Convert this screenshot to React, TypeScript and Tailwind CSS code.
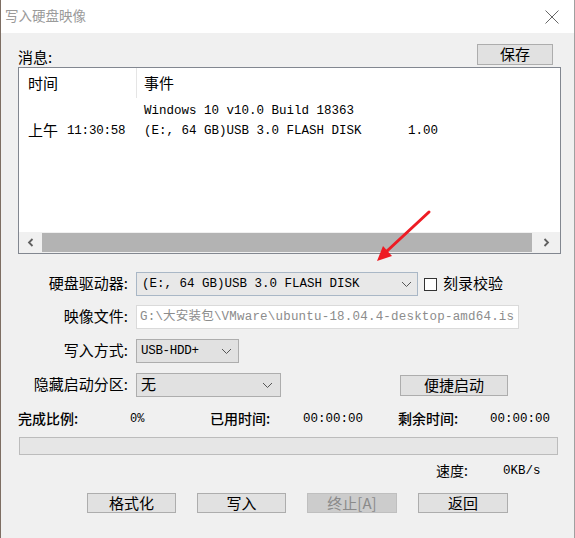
import React from 'react'

// shared font stacks
const CJK = "font-['Noto_Sans_CJK_SC',sans-serif]"
const MONO = "font-['Liberation_Mono','Noto_Sans_CJK_SC',monospace]"

function Chevron() {
  return (
    <svg width="11" height="7" viewBox="0 0 11 7" className="shrink-0">
      <path d="M1 1 L5.5 5.5 L10 1" fill="none" stroke="#555" strokeWidth="1" />
    </svg>
  )
}

function Btn({ label, disabled, className = '' }: { label: string; disabled?: boolean; className?: string }) {
  return (
    <div
      className={`flex items-center justify-center border pb-[2px] text-[15px] leading-none ${CJK} ${
        disabled ? 'border-[#bfbfbf] bg-[#cccccc] text-[#8a8a8a]' : 'border-[#adadad] bg-[#e1e1e1] text-black'
      } ${className}`}
    >
      {label}
    </div>
  )
}

export default function App() {
  return (
    <div className={`relative h-[538px] w-[575px] overflow-hidden border-l border-r border-l-[#7d6e63] border-r-[#a0a0a0] bg-[#f0f0f0] ${CJK}`}>
      {/* Title bar */}
      <div className="flex h-[33px] items-center justify-between bg-white pl-[4px] pr-[15px]">
        <span className="pb-[2px] text-[13.5px] leading-none text-[#9a9a9a]">写入硬盘映像</span>
        <svg width="14" height="14" viewBox="0 0 14 14">
          <path d="M0.5 0.5 L13.5 13.5 M13.5 0.5 L0.5 13.5" stroke="#666" strokeWidth="1" />
        </svg>
      </div>

      <div className="flex flex-col pl-[17px] pr-[13px]">
        {/* Messages header */}
        <div className="flex h-[34px] items-end justify-between">
          <span className="text-[15px] leading-[20px]">消息:</span>
          <Btn label="保存" className="mb-[2px] mr-[8px] h-[21px] w-[76px]" />
        </div>

        {/* Log list */}
        <div className="flex h-[187px] flex-col border border-[#828790] bg-white">
          <div className="flex h-[30px] items-center text-[15px] leading-none">
            <span className="w-[117px] pb-[2px] pl-[9px]">时间</span>
            <span className="h-full w-px bg-[#e5e5e5]" />
            <span className="pb-[2px] pl-[7px]">事件</span>
          </div>
          <div className={`mt-[3px] flex h-[20px] items-center text-[12.5px] ${MONO}`}>
            <span className="w-[125px]" />
            <span>Windows 10 v10.0 Build 18363</span>
          </div>
          <div className={`flex h-[20px] items-center text-[12.5px] ${MONO}`}>
            <span className="flex w-[125px] items-center pl-[9px]">
              <span className={`pb-[2px] text-[15px] ${CJK}`}>上午</span>
              <span className="ml-[9px] tracking-[-0.2px]">11:30:58</span>
            </span>
            <span className="w-[264px] whitespace-pre">(E:, 64 GB)USB 3.0 FLASH DISK</span>
            <span>1.00</span>
          </div>
          {/* horizontal scrollbar */}
          <div className="mt-auto flex h-[21px] bg-[#f0f0f0]">
            <div className="flex w-[23px] items-center justify-center">
              <svg width="7" height="9" viewBox="0 0 7 9">
                <path d="M5.5 1 L2 4.5 L5.5 8" fill="none" stroke="#606060" strokeWidth="1.8" />
              </svg>
            </div>
            <div className="my-px flex-1 bg-[#b3b3b3]" />
            <div className="flex w-[28px] items-center justify-center">
              <svg width="7" height="9" viewBox="0 0 7 9">
                <path d="M1.5 1 L5 4.5 L1.5 8" fill="none" stroke="#606060" strokeWidth="1.8" />
              </svg>
            </div>
          </div>
        </div>

        {/* Drive row */}
        <div className="mt-[18px] flex h-[24px] items-center">
          <span className="w-[110px] pb-[4px] text-right text-[15px] leading-none">硬盘驱动器:</span>
          <div className={`ml-[8px] flex h-full w-[282px] items-center justify-between border border-[#a9b7c6] bg-[#e8e8e8] pl-[5px] pr-[5px] text-[12.5px] ${MONO}`}>
            <span className="whitespace-pre">(E:, 64 GB)USB 3.0 FLASH DISK</span>
            <Chevron />
          </div>
          <span className="ml-[6px] h-[13px] w-[13px] border border-[#333] bg-white" />
          <span className="ml-[6px] pb-[4px] text-[15px] leading-none">刻录校验</span>
        </div>

        {/* Image file row */}
        <div className="mt-[9px] flex h-[24px] items-center">
          <span className="w-[110px] pb-[4px] text-right text-[15px] leading-none">映像文件:</span>
          <div className={`ml-[8px] flex h-full w-[383px] items-center overflow-hidden whitespace-nowrap border border-[#dadada] bg-white pl-[3px] text-[12.5px] tracking-[0.2px] text-[#8c8c8c] ${MONO}`}>
            G:\大安装包\VMware\ubuntu-18.04.4-desktop-amd64.is
          </div>
        </div>

        {/* Write mode row */}
        <div className="mt-[10px] flex h-[24px] items-center">
          <span className="w-[110px] pb-[4px] text-right text-[15px] leading-none">写入方式:</span>
          <div className={`ml-[8px] flex h-full w-[103px] items-center justify-between border border-[#adadad] bg-[#e1e1e1] pl-[4px] pr-[6px] text-[12.5px] ${MONO}`}>
            <span className="tracking-[-0.3px]">USB-HDD+</span>
            <Chevron />
          </div>
        </div>

        {/* Hidden partition row */}
        <div className="mt-[10px] flex h-[24px] items-center">
          <span className="w-[110px] pb-[4px] text-right text-[15px] leading-none">隐藏启动分区:</span>
          <div className="ml-[8px] flex h-full w-[145px] items-center justify-between border border-[#adadad] bg-[#e1e1e1] pl-[4px] pr-[7px] text-[15px] leading-none">
            <span className="pb-[3px]">无</span>
            <Chevron />
          </div>
          <Btn label="便捷启动" className="ml-[119px] h-[21px] w-[108px]" />
        </div>

        {/* Stats */}
        <div className="mt-[12px] flex h-[20px] items-center text-[14px] leading-none">
          <span className="w-[112px] pb-[2px] font-medium">完成比例:</span>
          <span className={`w-[80px] text-[12px] ${MONO}`}>0%</span>
          <span className="w-[93px] pb-[2px] font-medium">已用时间:</span>
          <span className={`w-[95px] text-[12.5px] ${MONO}`}>00:00:00</span>
          <span className="w-[92px] pb-[2px] font-medium">剩余时间:</span>
          <span className={`text-[12.5px] ${MONO}`}>00:00:00</span>
        </div>

        {/* Progress bar */}
        <div className="ml-px mr-[3px] mt-[8px] h-[18px] border border-[#bcbcbc] bg-[#e6e6e6]" />

        {/* Speed */}
        <div className="mt-[6px] flex h-[20px] items-center pl-[418px] text-[14px] leading-none">
          <span className="w-[67px] pb-[2px]">速度:</span>
          <span className={`text-[12.5px] ${MONO}`}>0KB/s</span>
        </div>

        {/* Action buttons */}
        <div className="mt-[12px] flex gap-[21px] pl-[69px]">
          <Btn label="格式化" className="h-[20px] w-[89px]" />
          <Btn label="写入" className="h-[20px] w-[89px]" />
          <Btn label="终止[A]" disabled className="h-[20px] w-[90px]" />
          <Btn label="返回" className="h-[20px] w-[90px]" />
        </div>
      </div>

      {/* Red annotation arrow */}
      <svg className="pointer-events-none absolute left-0 top-0" width="575" height="538">
        <line x1="428" y1="212" x2="386" y2="251" stroke="#ee1c24" strokeWidth="3" strokeLinecap="round" />
        <polygon points="376,261 391,256 382,246" fill="#ee1c24" />
      </svg>
    </div>
  )
}
